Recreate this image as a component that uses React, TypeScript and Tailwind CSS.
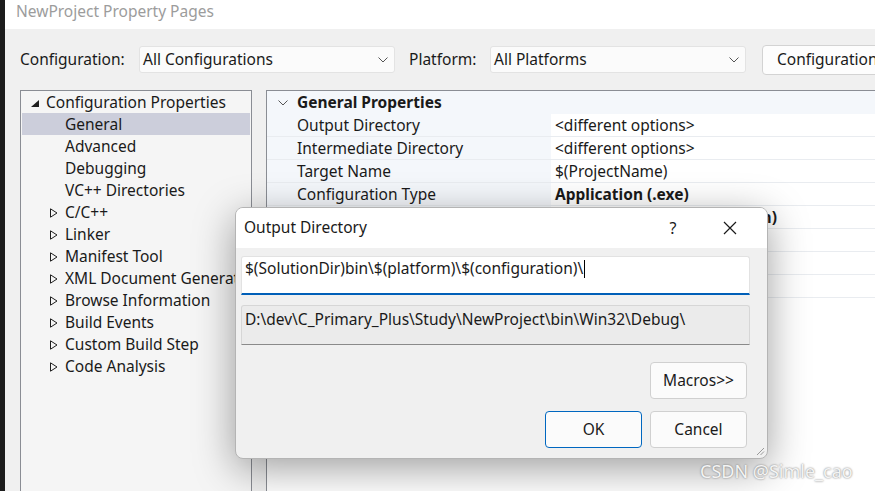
import React from 'react';

const font = { fontFamily: '"Noto Sans", "Open Sans", sans-serif' };

const treeItems: { label: string; kind: 'child' | 'collapsed'; selected?: boolean }[] = [
  { label: 'General', kind: 'child', selected: true },
  { label: 'Advanced', kind: 'child' },
  { label: 'Debugging', kind: 'child' },
  { label: 'VC++ Directories', kind: 'child' },
  { label: 'C/C++', kind: 'collapsed' },
  { label: 'Linker', kind: 'collapsed' },
  { label: 'Manifest Tool', kind: 'collapsed' },
  { label: 'XML Document Generator', kind: 'collapsed' },
  { label: 'Browse Information', kind: 'collapsed' },
  { label: 'Build Events', kind: 'collapsed' },
  { label: 'Custom Build Step', kind: 'collapsed' },
  { label: 'Code Analysis', kind: 'collapsed' },
];

const props: { name: string; value: string; bold?: boolean }[] = [
  { name: 'Output Directory', value: '<different options>' },
  { name: 'Intermediate Directory', value: '<different options>' },
  { name: 'Target Name', value: '$(ProjectName)' },
  { name: 'Configuration Type', value: 'Application (.exe)', bold: true },
  { name: 'Windows SDK Version', value: '10.0 (latest installed version)', bold: true },
  { name: 'Platform Toolset', value: 'Visual Studio 2019 (v142)' },
  { name: 'C++ Language Standard', value: 'Default (ISO C++14 Standard)' },
  { name: 'C Language Standard', value: 'Default (Legacy MSVC)' },
];

const Chevron = ({ className }: { className?: string }) => (
  <svg width="10" height="6" viewBox="0 0 10 6" className={className}>
    <path d="M0.5 0.5 L5 5 L9.5 0.5" fill="none" stroke="#555" strokeWidth="1" />
  </svg>
);

const FilledTri = () => (
  <svg width="8" height="7" viewBox="0 0 8 7">
    <path d="M8 0 L8 7 L0 7 Z" fill="#1e1e1e" />
  </svg>
);

const OpenTri = () => (
  <svg width="8" height="10" viewBox="0 0 8 10">
    <path d="M0.5 0.8 L7 5 L0.5 9.2 Z" fill="none" stroke="#1e1e1e" strokeWidth="1" />
  </svg>
);

const SelectBox = ({ value }: { value: string }) => (
  <div className="flex h-[27px] w-[256px] shrink-0 items-center justify-between rounded-[3px] border border-[#e3e3e3] bg-[#fbfbfb] pl-[3px] pr-[6px]">
    <span>{value}</span>
    <Chevron />
  </div>
);

export default function App() {
  return (
    <div className="relative flex h-[491px] w-[875px] overflow-hidden bg-[#f0f0f0] text-[15.5px] text-[#1a1a1a]" style={font}>
      <div className="w-[5px] shrink-0 bg-[#1c1c1c]" />
      <div className="flex min-w-0 flex-1 flex-col">
        <div className="flex h-[29px] shrink-0 items-start bg-white pl-[11px] text-[#9c9c9c]">NewProject Property Pages</div>

        <div className="flex h-[61px] shrink-0 items-center pl-[15px]">
          <span className="w-[119px] shrink-0">Configuration:</span>
          <SelectBox value="All Configurations" />
          <span className="ml-[14px] w-[81px] shrink-0">Platform:</span>
          <SelectBox value="All Platforms" />
          <div className="ml-[16px] flex h-[30px] shrink-0 items-center rounded-[4px] border border-[#d3d3d3] bg-[#fdfdfd] pl-[14px] pr-[20px] whitespace-nowrap">
            Configuration Manager...
          </div>
        </div>

        <div className="flex min-h-0 flex-1 pl-[15px]">
          <div className="w-[232px] shrink-0 border-l border-t border-r border-[#8a8d94] bg-[#f5f5f5] px-[1px]">
            <div className="flex h-[22px] items-center whitespace-nowrap pt-[2px]">
              <span className="ml-[9px] mr-[7px] flex w-[8px] items-center"><FilledTri /></span>
              Configuration Properties
            </div>
            {treeItems.map((t) => (
              <div
                key={t.label}
                className={`flex h-[22px] items-center overflow-hidden whitespace-nowrap pt-[2px] ${t.selected ? 'bg-[#cccedb]' : ''}`}
              >
                <span className="ml-[28px] mr-[7px] flex w-[8px] items-center">{t.kind === 'collapsed' ? <OpenTri /> : null}</span>
                {t.label}
              </div>
            ))}
          </div>

          <div className="ml-[14px] min-w-0 flex-1 border-l border-t border-[#8a8d94] bg-white">
            <div className="flex h-[23px] items-center bg-[#f4f7fb] font-bold">
              <span className="flex w-[30px] justify-center pl-[2px]"><Chevron /></span>
              General Properties
            </div>
            {props.map((p) => (
              <div key={p.name} className="flex h-[23px] items-center border-b border-[#e9ecf0]">
                <div className="flex h-full w-[284px] shrink-0 items-center whitespace-nowrap bg-[#f4f7fb] pl-[30px] pt-[2px]">{p.name}</div>
                <div className={`whitespace-nowrap pl-[4px] pt-[2px] ${p.bold ? 'font-bold' : ''}`}>{p.value}</div>
              </div>
            ))}
          </div>
        </div>
      </div>

      {/* Output Directory dialog */}
      <div className="absolute left-[235px] top-[207px] flex h-[252px] w-[533px] flex-col overflow-hidden rounded-[8px] border border-[#b4b4b4] bg-[#f0f0f0] shadow-[0_10px_40px_rgba(0,0,0,0.38)]">
        <div className="flex h-[40px] shrink-0 items-center bg-white pl-[8px]">
          <span className="flex-1">Output Directory</span>
          <span className="w-[16px] text-center text-[16px]">?</span>
          <span className="ml-[42px] mr-[30px] flex items-center">
            <svg width="14" height="14" viewBox="0 0 14 14">
              <path d="M1 1 L13 13 M13 1 L1 13" stroke="#1a1a1a" strokeWidth="1.2" />
            </svg>
          </span>
        </div>
        <div className="flex flex-col px-[5px] pt-[8px]">
          <div className="flex h-[39px] w-[509px] items-start rounded-t-[3px] border border-b-0 border-[#e2e2e2] border-b-[#005fb8] bg-white px-[3px] [border-bottom-width:2px] [border-bottom-style:solid]">
            <span className="whitespace-nowrap">$(SolutionDir)bin\$(platform)\$(configuration)\</span>
            <span className="ml-[1px] mt-[3px] h-[18px] w-[1px] bg-black" />
          </div>
          <div className="mt-[10px] h-[40px] w-[509px] rounded-t-[3px] border border-[#d6d6d6] border-b-[#8a8a8a] bg-[#ebebeb] px-[3px] pt-[2px] whitespace-nowrap">
            D:\dev\C_Primary_Plus\Study\NewProject\bin\Win32\Debug\
          </div>
        </div>
        <div className="flex flex-col items-end gap-[12px] pr-[20px] pt-[17px]">
          <div className="flex h-[37px] w-[97px] items-center justify-center rounded-[4px] border border-[#d0d0d0] bg-[#fbfbfb]">Macros&gt;&gt;</div>
          <div className="flex gap-[8px]">
            <div className="flex h-[37px] w-[97px] items-center justify-center rounded-[4px] border border-[#0067c0] bg-[#fbfbfb]">OK</div>
            <div className="flex h-[37px] w-[97px] items-center justify-center rounded-[4px] border border-[#d0d0d0] bg-[#fbfbfb]">Cancel</div>
          </div>
        </div>
        <svg width="9" height="9" viewBox="0 0 9 9" className="absolute bottom-[2px] right-[2px]">
          <path d="M8 1 L1 8 M8 4.5 L4.5 8" stroke="#9a9a9a" strokeWidth="1" />
        </svg>
      </div>

      <div className="absolute left-[700px] top-[458px] text-[18px] text-[#f4f4f4] [text-shadow:0_0_2px_#6a6a6a]">
        CSDN @Simle_cao
      </div>
    </div>
  );
}
